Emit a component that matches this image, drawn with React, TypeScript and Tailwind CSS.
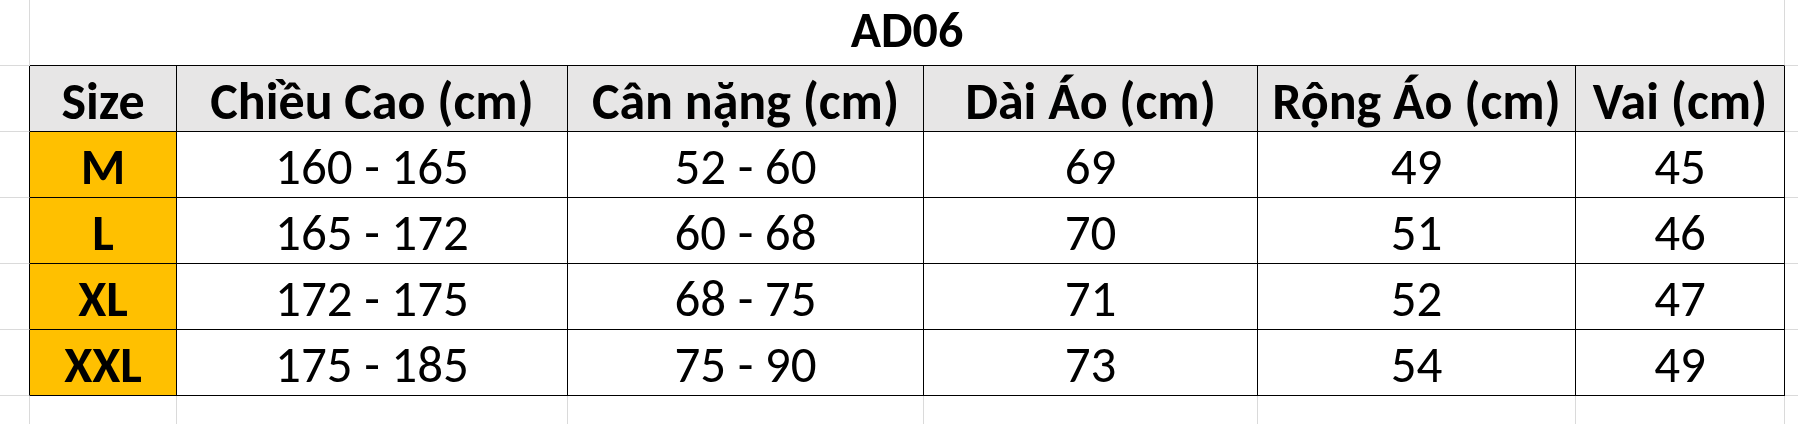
const LIGHT = 'border-[#dadada]';

const headers = ['Size', 'Chiều Cao (cm)', 'Cân nặng (cm)', 'Dài Áo (cm)', 'Rộng Áo (cm)', 'Vai (cm)'];

const rows = [
  ['M', '160 - 165', '52 - 60', '69', '49', '45'],
  ['L', '165 - 172', '60 - 68', '70', '51', '46'],
  ['XL', '172 - 175', '68 - 75', '71', '52', '47'],
  ['XXL', '175 - 185', '75 - 90', '73', '54', '49'],
];

function Margin() {
  return <div className="border-r border-b border-r-black border-b-[#dadada]" />;
}

function Spare() {
  return <div className={`border-b ${LIGHT}`} />;
}

export default function App() {
  return (
    <div className="w-[1798px] h-[424px] overflow-hidden bg-white text-black" style={{ fontFamily: 'Calibri, Lato, "Open Sans", sans-serif' }}>
      <div className="grid grid-cols-[30px_147px_391px_356px_334px_318px_209px_1fr] grid-rows-[66px_66px_66px_66px_66px_66px_40px]">
        {/* title row */}
        <div className={`border-r border-b ${LIGHT}`} />
        <div className="col-span-6 border-r border-r-[#dadada] border-b border-b-black flex items-end justify-center pb-[10px] text-[50px] font-bold leading-none">
          AD06
        </div>
        <Spare />

        {/* header row */}
        <Margin />
        {headers.map((h) => (
          <div key={h} className="bg-[#e7e6e6] border-r border-b border-black flex items-center justify-center pt-[4px] text-[52px] font-bold leading-none whitespace-nowrap">
            {h}
          </div>
        ))}
        <Spare />

        {rows.map((r) => (
          <>
            <Margin key={r[0] + 'm'} />
            {r.map((c, i) => (
              <div
                key={r[0] + i}
                className={`border-r border-b border-black flex items-center justify-center pt-[4px] text-[51px] leading-none ${i === 0 ? 'bg-[#ffc000] font-bold' : ''}`}
              >
                {c}
              </div>
            ))}
            <Spare key={r[0] + 's'} />
          </>
        ))}

        {/* empty row under the table */}
        <div className={`border-r ${LIGHT}`} />
        {[0, 1, 2, 3, 4, 5].map((i) => (
          <div key={i} className={`border-r ${LIGHT}`} />
        ))}
        <div />
      </div>
    </div>
  );
}
